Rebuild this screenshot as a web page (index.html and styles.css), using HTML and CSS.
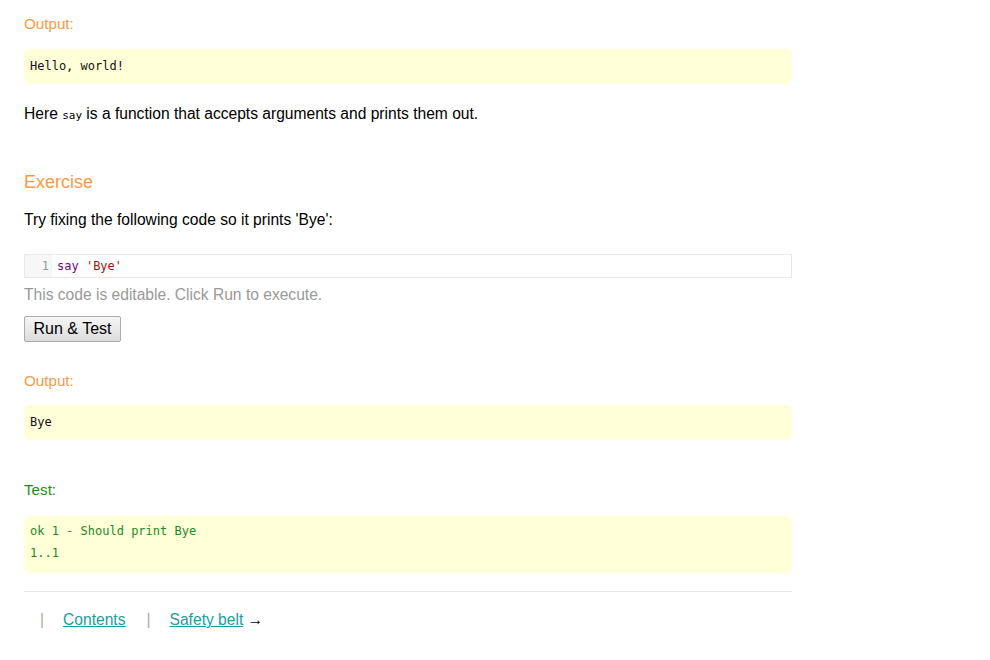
FILE: index.html
```html
<!DOCTYPE html>
<html>
<head>
<meta charset="utf-8">
<link rel="stylesheet" href="styles.css">
</head>
<body>
<main class="page">
  <div class="label label-output first">Output:</div>
  <pre class="out">Hello, world!</pre>
  <p class="text after-out">Here <code class="inline">say</code> is a function that accepts arguments and prints them out.</p>

  <h2 class="heading">Exercise</h2>
  <p class="text after-heading">Try fixing the following code so it prints 'Bye':</p>

  <div class="editor">
    <div class="gutter">1</div>
    <div class="code"><span class="kw">say</span> <span class="str">'Bye'</span></div>
  </div>
  <p class="hint">This code is editable. Click Run to execute.</p>
  <button class="run">Run &amp; Test</button>

  <div class="label label-output second">Output:</div>
  <pre class="out out2">Bye</pre>

  <div class="label label-test">Test:</div>
  <pre class="out test">ok 1 - Should print Bye
1..1</pre>

  <hr class="rule">
  <nav class="footer">
    <span class="sep">|</span><a href="#" class="link">Contents</a><span class="sep sep2">|</span><a href="#" class="link">Safety belt</a> <span class="arrow">→</span>
  </nav>
</main>
</body>
</html>
```

FILE: styles.css
```css
html, body {
  margin: 0;
  padding: 0;
  background: #fff;
}
body {
  font-family: "Liberation Sans", Arial, sans-serif;
  font-size: 15.6px;
  color: #000;
}
.page {
  width: 768px;
  padding: 0 24px;
}
.label {
  font-size: 15.2px;
  line-height: 20px;
}
.label-output { color: #fb9a44; }
.label-test { color: #1e8a1e; margin-top: 40px; }
.first { margin-top: 14px; }
.second { margin-top: 29px; }
.out {
  margin: 15px 0 0;
  background: #ffffd8;
  border-radius: 6px;
  padding: 10px 6px;
  font-family: "DejaVu Sans Mono", monospace;
  font-size: 12px;
  line-height: 15px;
  color: #111;
  white-space: pre;
}
.out2 { margin-top: 14px; }
.test {
  margin-top: 16px;
  color: #1e8a1e;
  line-height: 22px;
  padding: 4px 6px 9px;
}
.text {
  margin: 0;
  line-height: 20px;
}
.after-out { margin-top: 20px; }
.inline {
  font-family: "DejaVu Sans Mono", monospace;
  font-size: 11px;
}
.heading {
  margin: 44px 0 0;
  font-weight: normal;
  font-size: 18px;
  line-height: 24px;
  color: #fb9a44;
}
.after-heading { margin-top: 16px; }
.editor {
  margin-top: 24px;
  display: flex;
  border: 1px solid #e8e8e8;
  height: 22px;
  font-family: "DejaVu Sans Mono", monospace;
  font-size: 12px;
  line-height: 22px;
}
.gutter {
  width: 27px;
  box-sizing: border-box;
  background: #f7f7f7;
  color: #999;
  text-align: right;
  padding-right: 3px;
}
.code {
  padding-left: 5px;
}
.kw { color: #770088; }
.str { color: #aa1111; }
.hint {
  margin: 7px 0 0;
  line-height: 20px;
  color: #999;
}
.run {
  margin-top: 11px;
  display: block;
  width: 97px;
  height: 26px;
  padding: 0;
  font-family: "Liberation Sans", Arial, sans-serif;
  font-size: 16px;
  color: #000;
  background: linear-gradient(#f6f6f6, #dcdcdc);
  border: 1px solid #acacac;
  border-radius: 2px;
}
.rule {
  margin: 18px 0 0;
  border: 0;
  border-top: 1px solid #e8e8e8;
  height: 0;
}
.footer {
  margin-top: 18px;
  line-height: 20px;
  padding-left: 16px;
}
.sep {
  color: #aaa;
  margin-right: 19px;
}
.sep2 { margin-left: 21px; }
.link {
  color: #1a9e9e;
  text-decoration: underline;
}
.arrow { color: #000; }
```
